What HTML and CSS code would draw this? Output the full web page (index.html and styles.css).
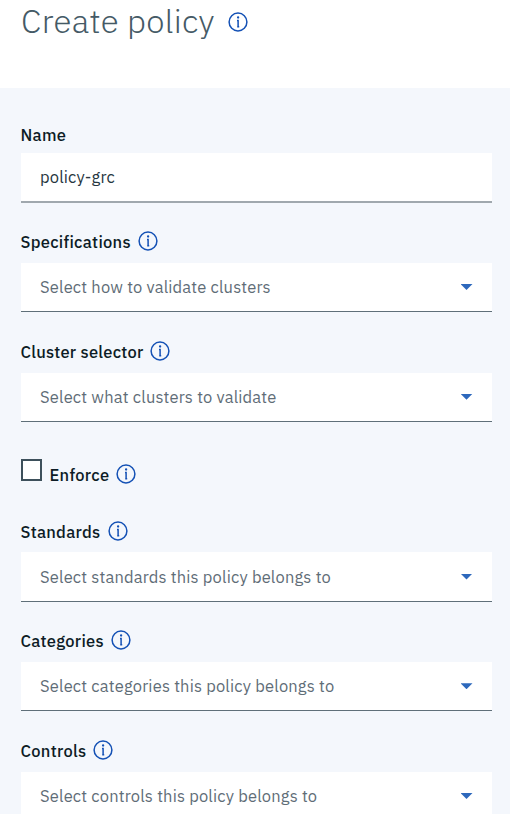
FILE: index.html
```html
<!DOCTYPE html>
<html lang="en">
<head>
<meta charset="utf-8">
<title>Create policy</title>
<link rel="stylesheet" href="styles.css">
</head>
<body>
<svg class="sprite" aria-hidden="true">
  <symbol id="info" viewBox="0 0 20 20">
    <circle cx="10" cy="10" r="8.9" fill="none" stroke="currentColor" stroke-width="1.5"/>
    <circle cx="10.1" cy="5.5" r="1.15" fill="currentColor"/>
    <path d="M9 8.5h1.1v6.3M9.2 14.7h2" fill="none" stroke="currentColor" stroke-width="1.5"/>
  </symbol>
</svg>
<header class="header">
  <h1 class="title">Create policy</h1>
  <svg class="info"><use href="#info"/></svg>
</header>
<main class="panel">
  <section class="field">
    <div class="label-row"><label class="label name" for="name">Name</label></div>
    <input class="box input" id="name" value="policy-grc">
  </section>
  <section class="field">
    <div class="label-row"><span class="label">Specifications</span><svg class="info"><use href="#info"/></svg></div>
    <div class="box"><span>Select how to validate clusters</span><i class="caret"></i></div>
  </section>
  <section class="field">
    <div class="label-row"><span class="label selector">Cluster selector</span><svg class="info"><use href="#info"/></svg></div>
    <div class="box"><span>Select what clusters to validate</span><i class="caret"></i></div>
  </section>
  <section class="enforce-row">
    <span class="checkbox"></span><span class="label">Enforce</span><svg class="info"><use href="#info"/></svg>
  </section>
  <section class="field">
    <div class="label-row"><span class="label">Standards</span><svg class="info"><use href="#info"/></svg></div>
    <div class="box"><span>Select standards this policy belongs to</span><i class="caret"></i></div>
  </section>
  <section class="field">
    <div class="label-row"><span class="label">Categories</span><svg class="info"><use href="#info"/></svg></div>
    <div class="box"><span>Select categories this policy belongs to</span><i class="caret"></i></div>
  </section>
  <section class="field">
    <div class="label-row"><span class="label">Controls</span><svg class="info"><use href="#info"/></svg></div>
    <div class="box"><span>Select controls this policy belongs to</span><i class="caret"></i></div>
  </section>
</main>
</body>
</html>
```
FILE: styles.css
```css
* { box-sizing: border-box; }
body { margin: 0; height: 814px; overflow: hidden; background: #fff; color: #0d1c26; font-family: "IBM Plex Sans", Roboto, sans-serif; }
.sprite { position: absolute; width: 0; height: 0; }
.header { height: 88px; padding-left: 21px; display: flex; align-items: flex-start; }
.title { margin: 0; width: 206.5px; font-size: 33px; line-height: 42px; font-weight: 300; letter-spacing: 0.27px; color: #455a66; white-space: nowrap; }
.header .info { margin-top: 11.5px; }
.info { width: 20px; height: 20px; flex: none; color: #1451b5; }
.panel { height: 726px; overflow: hidden; padding: 22.3px 18px 0 20.5px; background: #f4f7fc; }
.field { height: 109.7px; }
.label-row { height: 42.5px; margin-bottom: 0.5px; display: flex; align-items: center; }
.label { flex: none; padding-top: 2px; margin-right: 7px; font-size: 16.5px; line-height: 22px; font-weight: 500; letter-spacing: 0.28px; white-space: nowrap; }
.label.name { padding-top: 6px; }
.label.selector { letter-spacing: 0.24px; margin-right: 6px; }
.box { width: 100%; height: 49.2px; padding: 0 19.5px; border: 0; border-bottom: 1px solid #5f6f79; border-radius: 0; background: #fff; color: #5f6d77; display: flex; align-items: center; justify-content: space-between; font: 400 16.5px/22px "IBM Plex Sans", Roboto, sans-serif; letter-spacing: 0.17px; white-space: nowrap; }
.input { height: 49.7px; border-bottom: 2px solid #a0a8ae; color: #263640; display: block; }
.caret { width: 12px; height: 6px; background: #2d68bc; clip-path: polygon(0 0, 100% 0, 50% 100%); }
.enforce-row { height: 70.1px; display: flex; align-items: flex-start; padding-top: 19px; }
.checkbox { width: 21.5px; height: 22px; flex: none; border: 2px solid #3d505b; background: #fff; margin: 1px 7.5px 0 0; }
.enforce-row .label { padding-top: 6px; }
.enforce-row .info { margin-top: 6px; }
```
